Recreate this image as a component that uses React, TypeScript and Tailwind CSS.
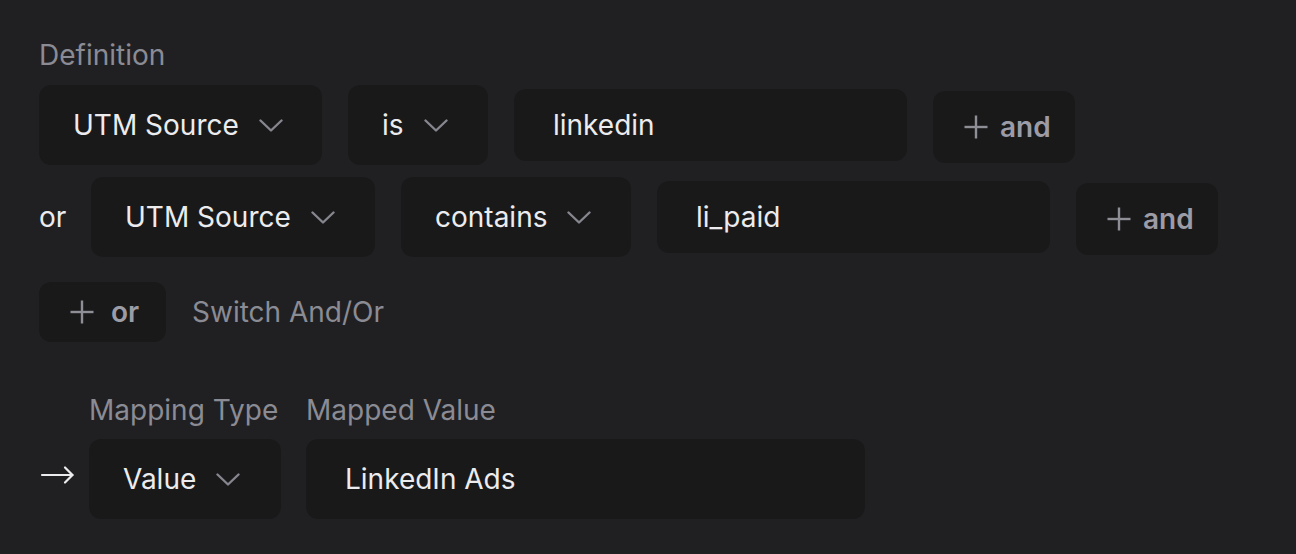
import React from "react";

const Chevron = () => (
  <svg width="24" height="13" viewBox="0 0 24 13" fill="none" className="shrink-0">
    <polyline points="1.5,1.5 12,11.5 22.5,1.5" stroke="#86868f" strokeWidth="2.4" strokeLinecap="round" strokeLinejoin="round" />
  </svg>
);

const Plus = () => (
  <svg width="24" height="24" viewBox="0 0 24 24" fill="none" className="shrink-0">
    <line x1="12" y1="0.5" x2="12" y2="23.5" stroke="#8e8e97" strokeWidth="2.4" />
    <line x1="0.5" y1="12" x2="23.5" y2="12" stroke="#8e8e97" strokeWidth="2.4" />
  </svg>
);

const Select = ({ label, w }: { label: string; w: string }) => (
  <div className={`flex h-[80px] shrink-0 items-center rounded-[12px] bg-[#19191a] pl-[34px] ${w}`}>
    <span className="text-[28px] leading-[40px] text-[#ececef]">{label}</span>
    <span className="ml-[20px] flex items-center">
      <Chevron />
    </span>
  </div>
);

const Input = ({ value, h, w }: { value: string; h: string; w: string }) => (
  <div className={`flex shrink-0 items-center rounded-[12px] bg-[#19191a] pl-[39px] ${h} ${w}`}>
    <span className="text-[28px] leading-[40px] text-[#ececef]">{value}</span>
  </div>
);

const AddButton = ({ label, h, gap, extra }: { label: string; h: string; gap: string; extra?: string }) => (
  <div className={`flex shrink-0 items-center rounded-[12px] bg-[#19191a] pl-[31px] ${h} ${extra ?? ""}`}>
    <Plus />
    <span className={`${gap} text-[28px] font-semibold leading-[40px] text-[#9c9ca6]`}>{label}</span>
  </div>
);

export default function App() {
  return (
    <div className="min-h-[554px] w-full bg-[#202023] pl-[39px] pt-[35px] font-['Inter','Noto_Sans',sans-serif]">
      <div className="text-[28px] leading-[40px] text-[#8b8b94]">Definition</div>

      <div className="mt-[10px] flex items-center gap-[26px]">
        <Select label="UTM Source" w="w-[283px]" />
        <Select label="is" w="w-[140px]" />
        <Input value="linkedin" h="h-[72px]" w="w-[393px]" />
        <AddButton label="and" h="h-[72px]" gap="ml-[12px]" extra="w-[142px] mt-[4px]" />
      </div>

      <div className="mt-[12px] flex items-center gap-[26px]">
        <span className="w-[26px] text-[28px] leading-[40px] text-[#ececef]">or</span>
        <Select label="UTM Source" w="w-[284px]" />
        <Select label="contains" w="w-[230px]" />
        <Input value="li_paid" h="h-[72px]" w="w-[393px]" />
        <AddButton label="and" h="h-[72px]" gap="ml-[12px]" extra="w-[142px] mt-[4px]" />
      </div>

      <div className="mt-[25px] flex items-center gap-[26px]">
        <AddButton label="or" h="h-[60px]" gap="ml-[17px]" extra="w-[127px]" />
        <span className="text-[28px] leading-[40px] text-[#8b8b94]">Switch And/Or</span>
      </div>

      <div className="mt-[48px] flex items-end">
        <svg width="50" height="80" viewBox="0 0 50 80" fill="none" className="shrink-0">
          <line x1="3" y1="36" x2="33.5" y2="36" stroke="#ececef" strokeWidth="2.2" strokeLinecap="round" />
          <polyline points="26,28.5 33.5,36 26,43.5" stroke="#ececef" strokeWidth="2.2" strokeLinecap="round" strokeLinejoin="round" />
        </svg>
        <div className="flex gap-[25px]">
          <div className="flex flex-col">
            <span className="text-[28px] leading-[40px] text-[#8b8b94]">Mapping Type</span>
            <div className="mt-[9px]">
              <Select label="Value" w="w-[192px]" />
            </div>
          </div>
          <div className="flex flex-col">
            <span className="text-[28px] leading-[40px] text-[#8b8b94]">Mapped Value</span>
            <div className="mt-[9px]">
              <Input value="LinkedIn Ads" h="h-[80px]" w="w-[559px]" />
            </div>
          </div>
        </div>
      </div>
    </div>
  );
}
